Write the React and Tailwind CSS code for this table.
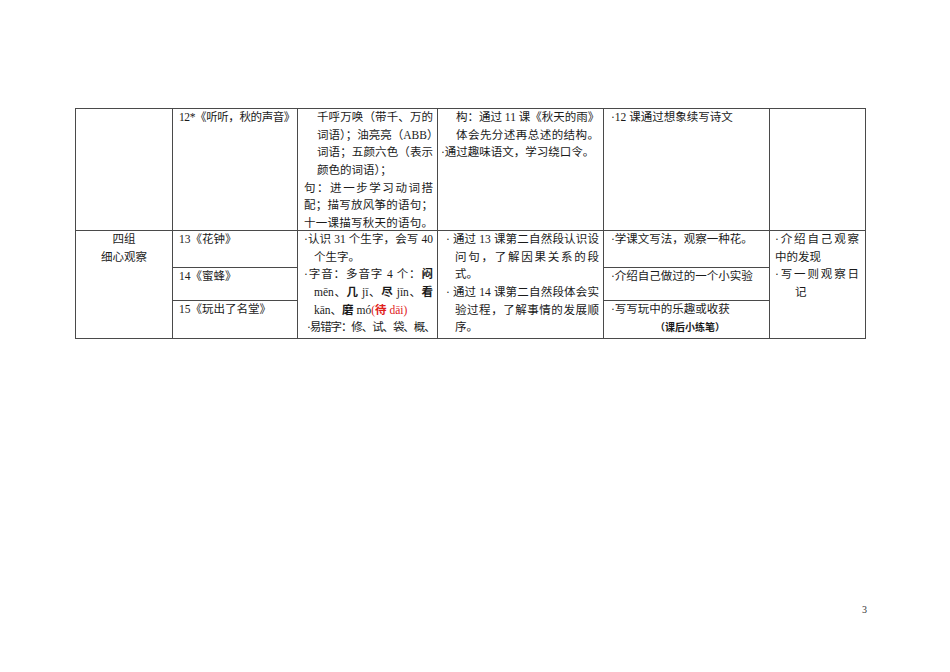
import React from 'react'

const font = { fontFamily: '"Liberation Serif", "Noto Sans CJK SC", serif' }

// one visual line of text inside a cell
const L = ({ children, pl = 0, j = false, className = '' }) => (
  <div
    className={`h-[17.7px] whitespace-nowrap ${j ? 'text-justify [text-align-last:justify]' : ''} ${className}`}
    style={pl ? { paddingLeft: pl } : undefined}
  >
    {children}
  </div>
)

// fixed box so tall cells don't stretch their rows (text runs to the border like in Word)
const Box = ({ children, h = 'h-[100px]' }) => <div className={h}>{children}</div>

const td = 'border border-[#4a4a4a] align-top p-0'

const App = () => {
  return (
    <div className='w-[950px] h-[672px] bg-white text-[#1a1a1a] text-[11.5px] leading-[17.7px]' style={font}>
      <div className='pt-[108px] pl-[75px]'>
        <table className='table-fixed border-collapse w-[790px]'>
          <colgroup>
            <col className='w-[97px]' />
            <col className='w-[125px]' />
            <col className='w-[140px]' />
            <col className='w-[166px]' />
            <col className='w-[166px]' />
            <col className='w-[96px]' />
          </colgroup>
          <tbody>
            <tr className='h-[122px]'>
              <td className={td}></td>
              <td className={`${td} pl-[6px]`}>
                <L className='tracking-[-0.4px]'>12*《听听，秋的声音》</L>
              </td>
              <td className={`${td} pl-[6px] pr-[4px]`}>
                <Box h='h-[110px]'>
                  <L pl={13} j>千呼万唤（带千、万的</L>
                  <L pl={13} j>词语）；油亮亮（ABB）</L>
                  <L pl={13} j>词语；五颜六色（表示</L>
                  <L pl={13}>颜色的词语）；</L>
                  <L j>句：进一步学习动词搭</L>
                  <L j>配；描写放风筝的语句；</L>
                  <L j>十一课描写秋天的语句。</L>
                </Box>
              </td>
              <td className={`${td} pl-[3px] pr-[4px]`}>
                <L pl={15} j>构：通过 11 课《秋天的雨》</L>
                <L pl={15} j>体会先分述再总述的结构。</L>
                <L>·通过趣味语文，学习绕口令。</L>
              </td>
              <td className={`${td} pl-[7px]`}>
                <L>·12 课通过想象续写诗文</L>
              </td>
              <td className={td}></td>
            </tr>

            <tr className='h-[37px]'>
              <td rowSpan={3} className={`${td} text-center`}>
                <Box>
                  <L>四组</L>
                  <L>细心观察</L>
                </Box>
              </td>
              <td className={`${td} pl-[6px]`}>
                <L>13《花钟》</L>
              </td>
              <td rowSpan={3} className={`${td} pl-[6px] pr-[4px]`}>
                <Box>
                  <L j>·认识 31 个生字，会写 40</L>
                  <L pl={10}>个生字。</L>
                  <L j>·字音：多音字 4 个：<b>闷</b></L>
                  <L pl={10} j>mēn、<b>几</b> jī、<b>尽</b> jīn、<b>看</b></L>
                  <L pl={10}>kān、<b>磨</b> mó<span className='text-[#e0201a]'>(<b>待</b> dāi)</span></L>
                  <L pl={3} className='tracking-[-1.1px]'>·易错字：修、试、袋、概、</L>
                </Box>
              </td>
              <td rowSpan={3} className={`${td} pl-[8px] pr-[4px]`}>
                <Box>
                  <L j>· 通过 13 课第二自然段认识设</L>
                  <L pl={9} j>问句，了解因果关系的段</L>
                  <L pl={9}>式。</L>
                  <L j>· 通过 14 课第二自然段体会实</L>
                  <L pl={9} j>验过程，了解事情的发展顺</L>
                  <L pl={9}>序。</L>
                </Box>
              </td>
              <td className={`${td} pl-[7px]`}>
                <L>·学课文写法，观察一种花。</L>
              </td>
              <td rowSpan={3} className={`${td} pl-[5px] pr-[6px]`}>
                <Box>
                  <L j>·介绍自己观察</L>
                  <L>中的发现</L>
                  <L j>·写一则观察日</L>
                  <L pl={20}>记</L>
                </Box>
              </td>
            </tr>
            <tr className='h-[33px]'>
              <td className={`${td} pl-[6px]`}>
                <L>14《蜜蜂》</L>
              </td>
              <td className={`${td} pl-[7px]`}>
                <L>·介绍自己做过的一个小实验</L>
              </td>
            </tr>
            <tr className='h-[38px]'>
              <td className={`${td} pl-[6px]`}>
                <L>15《玩出了名堂》</L>
              </td>
              <td className={`${td} pl-[7px]`}>
                <L>·写写玩中的乐趣或收获</L>
                <L className='text-center font-bold text-[10px]'>（课后小练笔）</L>
              </td>
            </tr>
          </tbody>
        </table>
      </div>
      <div className='mt-[265px] pl-[862px] text-[10px] leading-[12px] text-[#333]'>3</div>
    </div>
  )
}

export default App
